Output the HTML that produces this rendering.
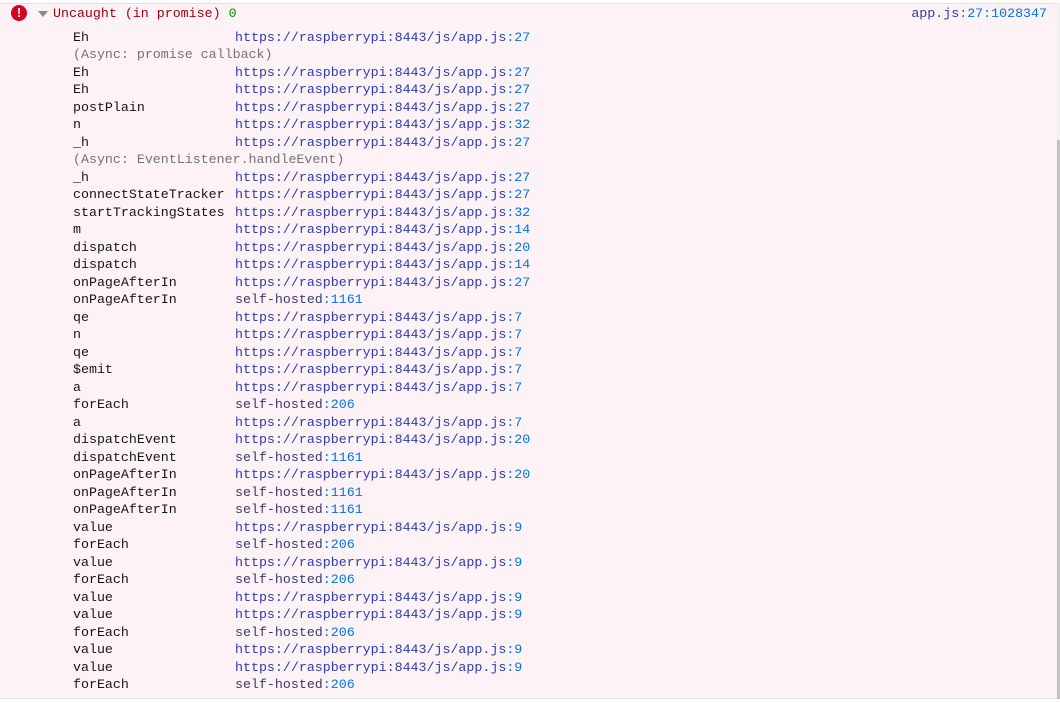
<!DOCTYPE html>
<html><head><meta charset="utf-8"><style>
html,body{margin:0;padding:0;width:1060px;height:702px;overflow:hidden;background:#fff}
.box{position:absolute;left:0;top:3px;width:1057px;height:696px;background:#fdf2f5;border-top:1px solid #e0e0e0;border-bottom:1px solid #e0e0e0;box-sizing:border-box}
.sb{position:absolute;left:1057px;top:3px;width:3px;height:696px;background:#f0f0f0}
.sb2{position:absolute;left:1057px;top:140px;width:3px;height:559px;background:#c1c1c1}
.m{font-family:"Liberation Mono",monospace;font-size:13.3px}
.hdr{position:absolute;top:5px;left:53px;color:#a4000f;line-height:17px;white-space:pre}
.hdr .z{color:#058b00}
.src{position:absolute;top:5px;right:13px;line-height:17px;color:#2e3bb0}
.n{color:#0074e8}
.rows{position:absolute;left:73px;top:28.5px;width:900px}
.r{height:17.5px;line-height:17.5px;position:relative;white-space:nowrap}
.f{color:#15141a}
.u{position:absolute;left:162px;top:0;color:#2e3bb0}
.sh{color:#3a3a6e}
.a{color:#737373}
.icon{position:absolute;left:11px;top:5px;width:16px;height:16px;border-radius:50%;background:#d70022;color:#fff;font:bold 13px "Liberation Sans",sans-serif;text-align:center;line-height:16px}
.tri{position:absolute;left:38px;top:11px;width:0;height:0;border-left:5px solid transparent;border-right:5px solid transparent;border-top:6px solid #8a8a8a}
</style></head><body>
<div class="box"></div><div class="sb"></div><div class="sb2"></div>
<div class="icon">!</div><div class="tri"></div>
<div class="hdr m">Uncaught (in promise) <span class="z">0</span></div>
<div class="src m">app.js<span class="n">:27:1028347</span></div>
<div class="rows m">
<div class="r"><span class="f">Eh</span><span class="u">https://raspberrypi:8443/js/app.js<span class="n">:27</span></span></div>
<div class="r"><span class="a">(Async: promise callback)</span></div>
<div class="r"><span class="f">Eh</span><span class="u">https://raspberrypi:8443/js/app.js<span class="n">:27</span></span></div>
<div class="r"><span class="f">Eh</span><span class="u">https://raspberrypi:8443/js/app.js<span class="n">:27</span></span></div>
<div class="r"><span class="f">postPlain</span><span class="u">https://raspberrypi:8443/js/app.js<span class="n">:27</span></span></div>
<div class="r"><span class="f">n</span><span class="u">https://raspberrypi:8443/js/app.js<span class="n">:32</span></span></div>
<div class="r"><span class="f">_h</span><span class="u">https://raspberrypi:8443/js/app.js<span class="n">:27</span></span></div>
<div class="r"><span class="a">(Async: EventListener.handleEvent)</span></div>
<div class="r"><span class="f">_h</span><span class="u">https://raspberrypi:8443/js/app.js<span class="n">:27</span></span></div>
<div class="r"><span class="f">connectStateTracker</span><span class="u">https://raspberrypi:8443/js/app.js<span class="n">:27</span></span></div>
<div class="r"><span class="f">startTrackingStates</span><span class="u">https://raspberrypi:8443/js/app.js<span class="n">:32</span></span></div>
<div class="r"><span class="f">m</span><span class="u">https://raspberrypi:8443/js/app.js<span class="n">:14</span></span></div>
<div class="r"><span class="f">dispatch</span><span class="u">https://raspberrypi:8443/js/app.js<span class="n">:20</span></span></div>
<div class="r"><span class="f">dispatch</span><span class="u">https://raspberrypi:8443/js/app.js<span class="n">:14</span></span></div>
<div class="r"><span class="f">onPageAfterIn</span><span class="u">https://raspberrypi:8443/js/app.js<span class="n">:27</span></span></div>
<div class="r"><span class="f">onPageAfterIn</span><span class="u sh">self-hosted<span class="n">:1161</span></span></div>
<div class="r"><span class="f">qe</span><span class="u">https://raspberrypi:8443/js/app.js<span class="n">:7</span></span></div>
<div class="r"><span class="f">n</span><span class="u">https://raspberrypi:8443/js/app.js<span class="n">:7</span></span></div>
<div class="r"><span class="f">qe</span><span class="u">https://raspberrypi:8443/js/app.js<span class="n">:7</span></span></div>
<div class="r"><span class="f">$emit</span><span class="u">https://raspberrypi:8443/js/app.js<span class="n">:7</span></span></div>
<div class="r"><span class="f">a</span><span class="u">https://raspberrypi:8443/js/app.js<span class="n">:7</span></span></div>
<div class="r"><span class="f">forEach</span><span class="u sh">self-hosted<span class="n">:206</span></span></div>
<div class="r"><span class="f">a</span><span class="u">https://raspberrypi:8443/js/app.js<span class="n">:7</span></span></div>
<div class="r"><span class="f">dispatchEvent</span><span class="u">https://raspberrypi:8443/js/app.js<span class="n">:20</span></span></div>
<div class="r"><span class="f">dispatchEvent</span><span class="u sh">self-hosted<span class="n">:1161</span></span></div>
<div class="r"><span class="f">onPageAfterIn</span><span class="u">https://raspberrypi:8443/js/app.js<span class="n">:20</span></span></div>
<div class="r"><span class="f">onPageAfterIn</span><span class="u sh">self-hosted<span class="n">:1161</span></span></div>
<div class="r"><span class="f">onPageAfterIn</span><span class="u sh">self-hosted<span class="n">:1161</span></span></div>
<div class="r"><span class="f">value</span><span class="u">https://raspberrypi:8443/js/app.js<span class="n">:9</span></span></div>
<div class="r"><span class="f">forEach</span><span class="u sh">self-hosted<span class="n">:206</span></span></div>
<div class="r"><span class="f">value</span><span class="u">https://raspberrypi:8443/js/app.js<span class="n">:9</span></span></div>
<div class="r"><span class="f">forEach</span><span class="u sh">self-hosted<span class="n">:206</span></span></div>
<div class="r"><span class="f">value</span><span class="u">https://raspberrypi:8443/js/app.js<span class="n">:9</span></span></div>
<div class="r"><span class="f">value</span><span class="u">https://raspberrypi:8443/js/app.js<span class="n">:9</span></span></div>
<div class="r"><span class="f">forEach</span><span class="u sh">self-hosted<span class="n">:206</span></span></div>
<div class="r"><span class="f">value</span><span class="u">https://raspberrypi:8443/js/app.js<span class="n">:9</span></span></div>
<div class="r"><span class="f">value</span><span class="u">https://raspberrypi:8443/js/app.js<span class="n">:9</span></span></div>
<div class="r"><span class="f">forEach</span><span class="u sh">self-hosted<span class="n">:206</span></span></div>
</div>
</body></html>
